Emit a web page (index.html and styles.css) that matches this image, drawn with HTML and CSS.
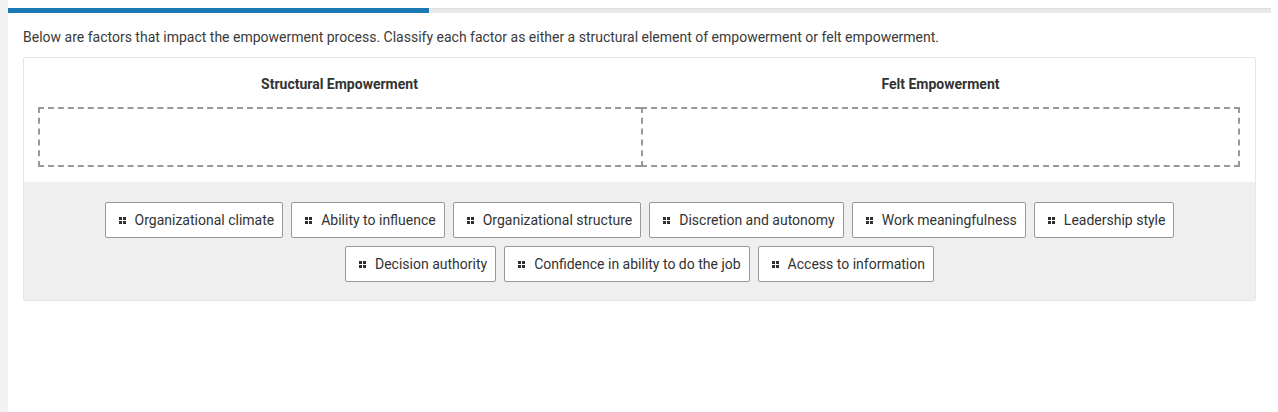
FILE: index.html
```html
<!DOCTYPE html>
<html lang="en">
<head>
<meta charset="utf-8">
<title>Empowerment classification</title>
<link rel="stylesheet" href="styles.css">
</head>
<body>
<div class="page">
  <aside class="rail"></aside>
  <main class="main">
    <div class="progress"><div class="progress-fill" style="width:421px"></div></div>
    <p class="prompt">Below are factors that impact the empowerment process. Classify each factor as either a structural element of empowerment or felt empowerment.</p>
    <section class="card">
      <div class="columns">
        <div class="column">
          <h3 class="col-title">Structural Empowerment</h3>
          <div class="zone zone-left"></div>
        </div>
        <div class="column">
          <h3 class="col-title">Felt Empowerment</h3>
          <div class="zone zone-right"></div>
        </div>
      </div>
      <div class="bank">
        <div class="chip-row">
          <div class="chip"><span class="grip"><i></i><i></i><i></i><i></i></span>Organizational climate</div>
          <div class="chip"><span class="grip"><i></i><i></i><i></i><i></i></span>Ability to influence</div>
          <div class="chip"><span class="grip"><i></i><i></i><i></i><i></i></span>Organizational structure</div>
          <div class="chip"><span class="grip"><i></i><i></i><i></i><i></i></span>Discretion and autonomy</div>
          <div class="chip"><span class="grip"><i></i><i></i><i></i><i></i></span>Work meaningfulness</div>
          <div class="chip"><span class="grip"><i></i><i></i><i></i><i></i></span>Leadership style</div>
        </div>
        <div class="chip-row">
          <div class="chip"><span class="grip"><i></i><i></i><i></i><i></i></span>Decision authority</div>
          <div class="chip"><span class="grip"><i></i><i></i><i></i><i></i></span>Confidence in ability to do the job</div>
          <div class="chip"><span class="grip"><i></i><i></i><i></i><i></i></span>Access to information</div>
        </div>
      </div>
    </section>
  </main>
</div>
</body>
</html>
```

FILE: styles.css
```css
* { box-sizing: border-box; }
html, body { margin: 0; padding: 0; background: #ffffff; }
body {
  font-family: Roboto, "Liberation Sans", Arial, sans-serif;
  color: #333333;
  height: 412px;
  overflow: hidden;
}
.page {
  display: flex;
  height: 412px;
}
.rail {
  width: 8px;
  flex: none;
  background: #f2f2f2;
}
.main {
  width: 1263px;
  flex: none;
  padding-top: 8px;
}
.progress {
  height: 5px;
  background: linear-gradient(#dcdcdc, #e9e9e9 40%, #ebebeb);
}
.progress-fill {
  height: 5px;
  background: #1b79b6;
}
.prompt {
  margin: 14px 0 0 15px;
  font-size: 14px;
  line-height: 20px;
  color: #3a3a3a;
}
.card {
  margin: 10px 15px 0 15px;
  border: 1px solid #e6e6e6;
  border-radius: 2px;
  background: #fff;
}
.columns {
  display: grid;
  grid-template-columns: 603px 599px;
  padding: 16px 15px 15px 14px;
}
.col-title {
  margin: 0 0 13px 0;
  text-align: center;
  font-size: 14px;
  font-weight: 700;
  line-height: 20px;
  color: #333333;
}
.zone {
  height: 60px;
  border: 2px dashed #999999;
}
.zone-left { border-right: none; }
.bank {
  background: #efefef;
  padding: 20px 0 18px 0;
  display: flex;
  flex-direction: column;
  gap: 8px;
}
.chip-row {
  display: flex;
  justify-content: center;
  gap: 8px;
}
.chip {
  height: 36px;
  display: flex;
  align-items: center;
  padding: 0 8px 0 13px;
  border: 1px solid #999999;
  border-radius: 2px;
  background: #ffffff;
  font-size: 14px;
  color: #333333;
  white-space: nowrap;
}
.grip {
  display: grid;
  grid-template-columns: 3px 3px;
  grid-template-rows: 3px 3px;
  gap: 1px;
  margin-right: 9px;
}
.grip i {
  display: block;
  width: 3px;
  height: 3px;
  background: #2e2e2e;
}
```
